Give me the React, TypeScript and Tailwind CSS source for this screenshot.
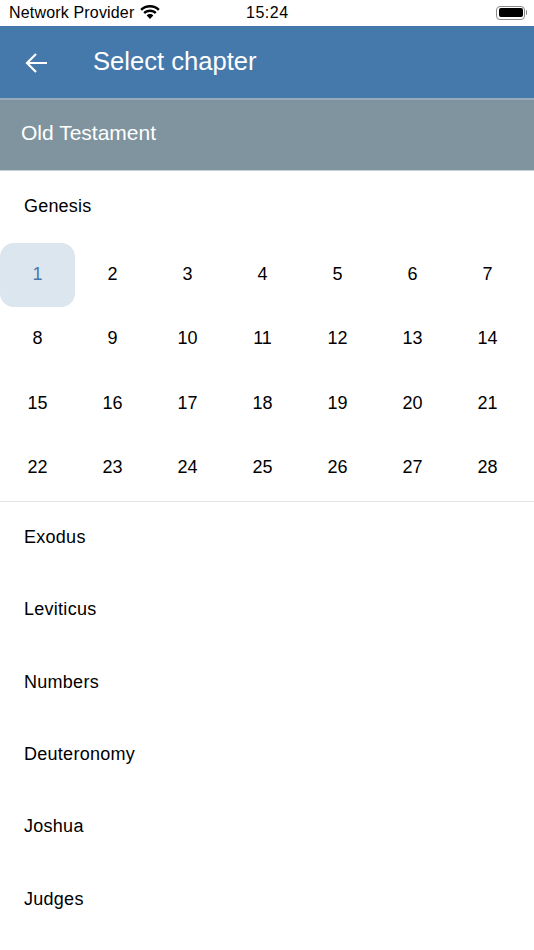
import React from "react";

const books = ["Exodus", "Leviticus", "Numbers", "Deuteronomy", "Joshua", "Judges"];
const chapters = Array.from({ length: 28 }, (_, i) => i + 1);

export default function App() {
  return (
    <div className="w-[534px] h-[950px] overflow-hidden bg-white font-['Liberation_Sans',Arial,sans-serif] text-black">
      <div className="h-[26px] relative flex items-center justify-between pl-[9px] pr-[7px]">
        <div className="flex items-center gap-[6px]">
          <span className="text-[16px] leading-[26px] tracking-[0.17px]">Network Provider</span>
          <svg width="20" height="15" viewBox="0 0 20 15" className="mt-[-2px]">
            <path d="M10 2.6c3.1 0 5.9 1.2 8 3.1l1.7-1.8C17.2 1.5 13.8 0 10 0S2.8 1.500.3 3.900L2 5.700c2.100-1.900 4.900-3.100 8-3.100z" fill="#000" />
            <path d="M10 7.100c1.900 0 3.600.7 4.900 1.900l1.700-1.800C14.900 5.600 12.600 4.600 10 4.600s-4.900 1-6.600 2.600l1.700 1.800c1.300-1.200 3-1.900 4.900-1.900z" fill="#000" />
            <path d="M10 9.100c-1.300 0-2.400.5-3.300 1.300L10 14l3.300-3.600c-.9-.8-2-1.300-3.300-1.300z" fill="#000" />
          </svg>
        </div>
        <span className="absolute left-[246px] top-0 text-[16px] leading-[26px] font-medium tracking-[0.5px]">15:24</span>
        <div className="flex items-center mt-[-1px]">
          <div className="w-[29px] h-[14px] rounded-[4px] border border-[#8a8a8a] p-[1.5px]">
            <div className="w-full h-full bg-black rounded-[2px]" />
          </div>
          <div className="w-[1.5px] h-[5px] bg-[#8a8a8a] ml-[0.5px] rounded-r-sm" />
        </div>
      </div>

      <div className="h-[72px] bg-[#4679ab] flex items-center">
        <svg width="24" height="24" viewBox="0 0 24 24" fill="none" stroke="#fff" strokeWidth="2.2" className="ml-[24px] mt-[1px]">
          <path d="M23 12H3M12 3l-9 9 9 9" />
        </svg>
        <span className="ml-[45px] text-[25.6px] text-white leading-none">Select chapter</span>
      </div>
      <div className="h-[73px] bg-[#7f949e] border-t-2 border-[#98abb8] border-b-1 border-b-[#c3d0d6] flex items-center pl-[21px]">
        <span className="text-[21px] text-white leading-none mt-[-5px]">Old Testament</span>
      </div>

      <div className="h-[71.5px] flex items-center pl-[24px] text-[18px] tracking-[0.2px]">Genesis</div>

      <div className="border-b border-[#e3e3e3] pb-[0.5px]">
        <div className="grid grid-cols-7 w-[525px]">
          {chapters.map((n) => (
            <div
              key={n}
              className={
                n === 1
                  ? "h-[64.5px] pb-[1px] flex items-center justify-center text-[18px] bg-[#dce6ef] text-[#4679ab] rounded-[14px]"
                  : "h-[64.5px] pb-[1px] flex items-center justify-center text-[18px]"
              }
            >
              {n}
            </div>
          ))}
        </div>
      </div>

      <div className="flex flex-col mt-[-0.5px]">
        {books.map((b) => (
          <div key={b} className="h-[72.3px] flex items-center pl-[24px] text-[18px] tracking-[0.27px]">
            {b}
          </div>
        ))}
      </div>
    </div>
  );
}
